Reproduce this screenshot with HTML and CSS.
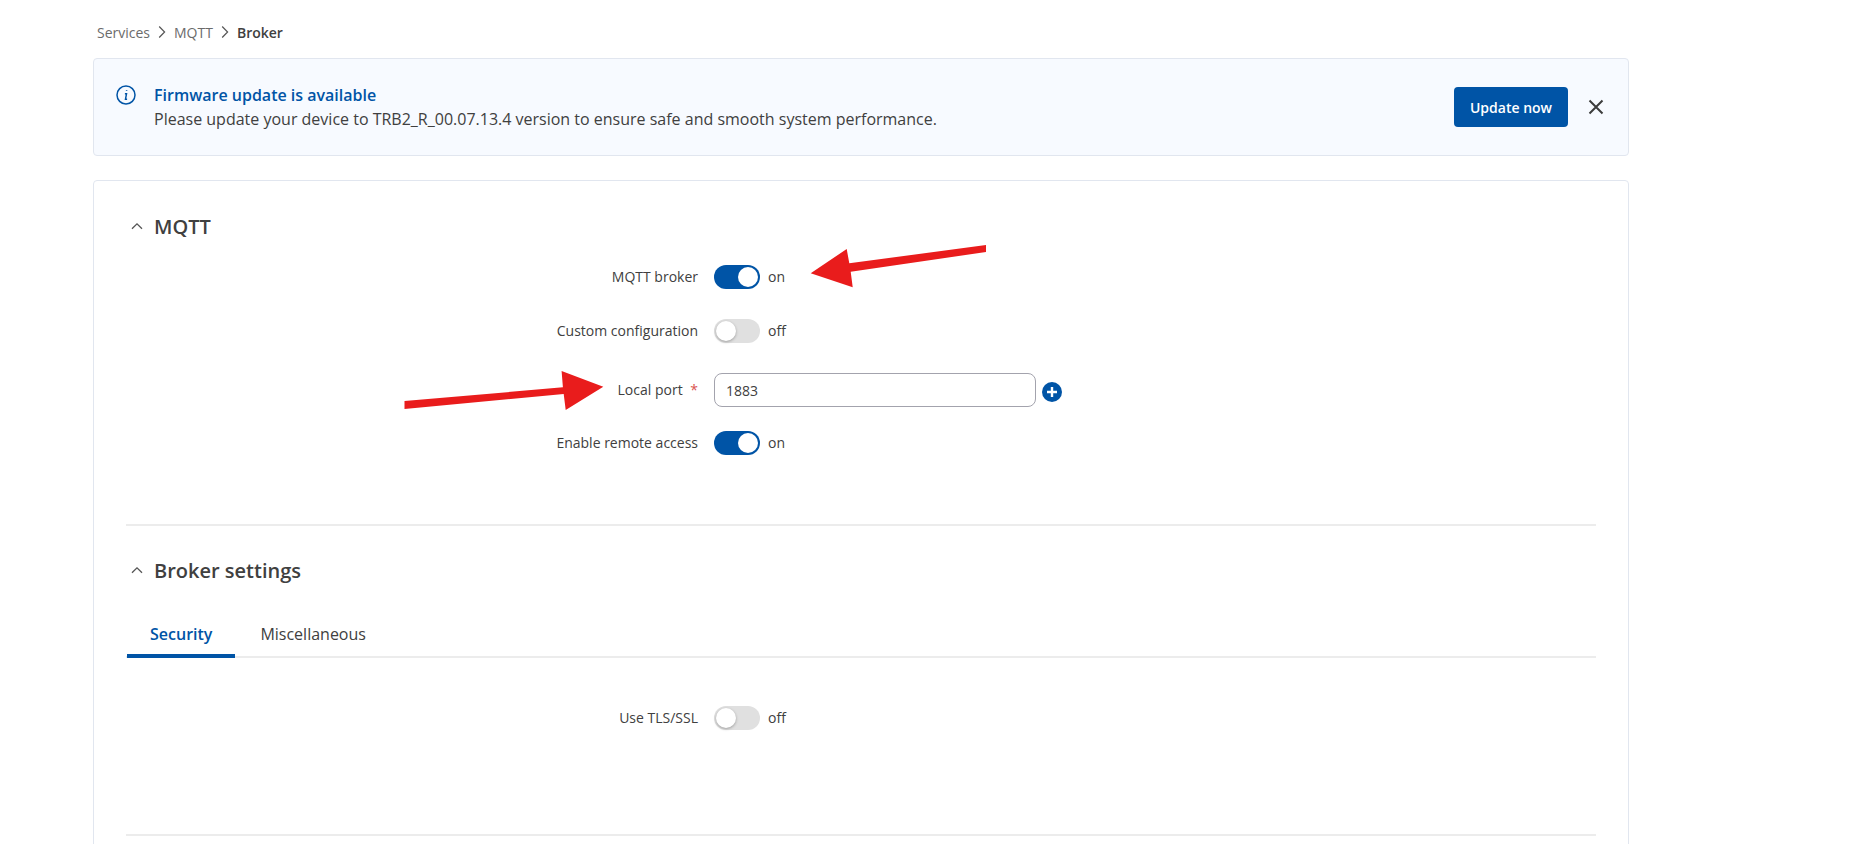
FILE: index.html
```html
<!DOCTYPE html>
<html lang="en">
<head>
<meta charset="utf-8">
<title>MQTT Broker</title>
<link rel="stylesheet" href="styles.css">
</head>
<body>
<div class="page">
  <nav class="crumbs">
    <span>Services</span>
    <svg class="crumb-sep" viewBox="0 0 8 14"><path d="M1.2 1.5 6.6 7 1.2 12.5"/></svg>
    <span>MQTT</span>
    <svg class="crumb-sep" viewBox="0 0 8 14"><path d="M1.2 1.5 6.6 7 1.2 12.5"/></svg>
    <strong>Broker</strong>
  </nav>

  <section class="banner">
    <svg class="info" viewBox="0 0 20 20"><circle cx="10" cy="10" r="9"/><path d="M10.6 5.2v.9M8.9 8.8h1.6l-1 5.4h1.6"/></svg>
    <div class="banner-text">
      <div class="banner-title">Firmware update is available</div>
      <div>Please update your device to TRB2_R_00.07.13.4 version to ensure safe and smooth system performance.</div>
    </div>
    <button class="btn">Update now</button>
    <svg class="close" viewBox="0 0 16 16"><path d="M1.5 1.5l13 13M14.5 1.5l-13 13"/></svg>
  </section>

  <main class="card">
    <section class="section">
      <h2 class="heading">
        <svg class="chev" viewBox="0 0 12 8"><path d="M1 6.8 6 1.8l5 5"/></svg>
        MQTT
      </h2>
      <div class="form">
        <div class="row">
          <label class="lbl">MQTT broker</label>
          <span class="toggle on"></span><span class="state">on</span>
        </div>
        <div class="row">
          <label class="lbl">Custom configuration</label>
          <span class="toggle"></span><span class="state">off</span>
        </div>
        <div class="row row-input">
          <label class="lbl">Local port <i class="req">*</i></label>
          <input class="field" value="1883">
          <svg class="plus" viewBox="0 0 20 20"><circle cx="10" cy="10" r="10"/><path d="M10 5v10M5 10h10"/></svg>
        </div>
        <div class="row">
          <label class="lbl">Enable remote access</label>
          <span class="toggle on"></span><span class="state">on</span>
        </div>
      </div>
    </section>

    <section class="section section-broker">
      <h2 class="heading">
        <svg class="chev" viewBox="0 0 12 8"><path d="M1 6.8 6 1.8l5 5"/></svg>
        Broker settings
      </h2>
      <div class="tabs">
        <span class="tab active">Security</span>
        <span class="tab">Miscellaneous</span>
      </div>
      <div class="form form-tab">
        <div class="row">
          <label class="lbl">Use TLS/SSL</label>
          <span class="toggle"></span><span class="state">off</span>
        </div>
      </div>
    </section>

    <section class="section section-next"></section>
  </main>
</div>

<svg class="arrows" viewBox="0 0 1862 844">
  <polygon points="810.7,273.3 846.7,249 849.3,263.3 986,245 986,252 850.7,271.7 852.7,287.3"/>
  <polygon points="603.3,386.7 561.6,371 562.9,387.3 404.5,401 404.5,409 563.7,394 565.7,410"/>
</svg>
</body>
</html>
```

FILE: styles.css
```css
* { box-sizing: border-box; }
html, body { margin: 0; height: 844px; overflow: hidden; background: #fff; }
body { font-family: "Open Sans", "Liberation Sans", sans-serif; font-size: 14px; color: #404040; }

.page { width: 1536px; height: 844px; overflow: hidden; margin-left: 93px; padding-top: 22px; }

.crumbs { display: flex; align-items: center; height: 20px; padding-left: 4px; color: #6b6b6b; font-size: 14px; }
.crumbs strong { font-weight: 600; color: #404040; }
.crumb-sep { width: 8px; height: 14px; margin: 0 8px; fill: none; stroke: #555; stroke-width: 1.2; }

.banner { display: flex; align-items: center; height: 98px; margin-top: 16px; padding: 0 24px 0 22px; background: #f7faff; border: 1px solid #e1e6ef; border-radius: 4px; font-size: 16px; line-height: 24px; }
.info { flex: none; width: 20px; height: 20px; margin-right: 18px; margin-top: -24px; fill: none; stroke: #0054a6; stroke-width: 1.5; }
.banner-text { flex: 1; }
.banner-title { font-weight: 600; color: #0054a6; }
.btn { width: 114px; height: 40px; padding: 0; border: 0; border-radius: 4px; background: #0054a6; color: #fff; font: 600 14px "Open Sans", sans-serif; }
.close { flex: none; width: 16px; height: 16px; margin-left: 20px; fill: none; stroke: #3c3c3c; stroke-width: 2; }

.card { height: 900px; margin-top: 24px; padding: 29px 32px 0; border: 1px solid #e1e6ef; border-radius: 4px; }

.section-broker { padding-top: 28px; border-top: 2px solid #ececec; }
.section-next { border-top: 2px solid #ececec; }

.heading { display: flex; align-items: center; height: 32px; margin: 0; font-size: 20px; font-weight: 600; color: #404040; }
.chev { width: 12px; height: 8px; margin: 0 11px 0 5px; fill: none; stroke: #555; stroke-width: 1.3; }

.form { padding-top: 23px; height: 282px; }
.form-tab { padding-top: 48px; height: 176px; }

.row { display: flex; align-items: center; height: 24px; margin-bottom: 30px; }
.row-input { height: 34px; margin-bottom: 24px; }

.lbl { width: 588px; padding-right: 16px; padding-bottom: 1px; text-align: right; }
.req { margin-left: 4px; font-style: normal; color: #d9534f; }

.toggle { position: relative; width: 46px; height: 24px; border-radius: 12px; background: #e0e0e0; }
.toggle::after { content: ""; position: absolute; left: 2px; top: 2px; width: 20px; height: 20px; border-radius: 50%; background: #fff; box-shadow: 0 1px 3px rgba(0,0,0,.3); }
.toggle.on { background: #0054a6; }
.toggle.on::after { left: 24px; box-shadow: none; }
.state { margin-left: 8px; padding-bottom: 1px; }

.field { width: 322px; height: 34px; padding: 0 11px; border: 1px solid #a3a3ad; border-radius: 8px; font: 14px "Open Sans", sans-serif; color: #404040; background: #fff; }
.plus { width: 20px; height: 20px; margin: 4px 0 0 6px; fill: #0054a6; stroke: none; }
.plus path { fill: none; stroke: #fff; stroke-width: 2.4; }

.tabs { display: flex; gap: 2px; height: 44px; margin-top: 28px; border-bottom: 2px solid #ececec; font-size: 16px; }
.tab { height: 44px; padding: 8px 23px 0; line-height: 24px; }
.tab.active { margin-left: 1px; font-weight: 600; color: #0054a6; border-bottom: 4px solid #0054a6; }

.arrows { position: absolute; left: 0; top: 0; width: 1862px; height: 844px; fill: #e91c1c; pointer-events: none; }
```
